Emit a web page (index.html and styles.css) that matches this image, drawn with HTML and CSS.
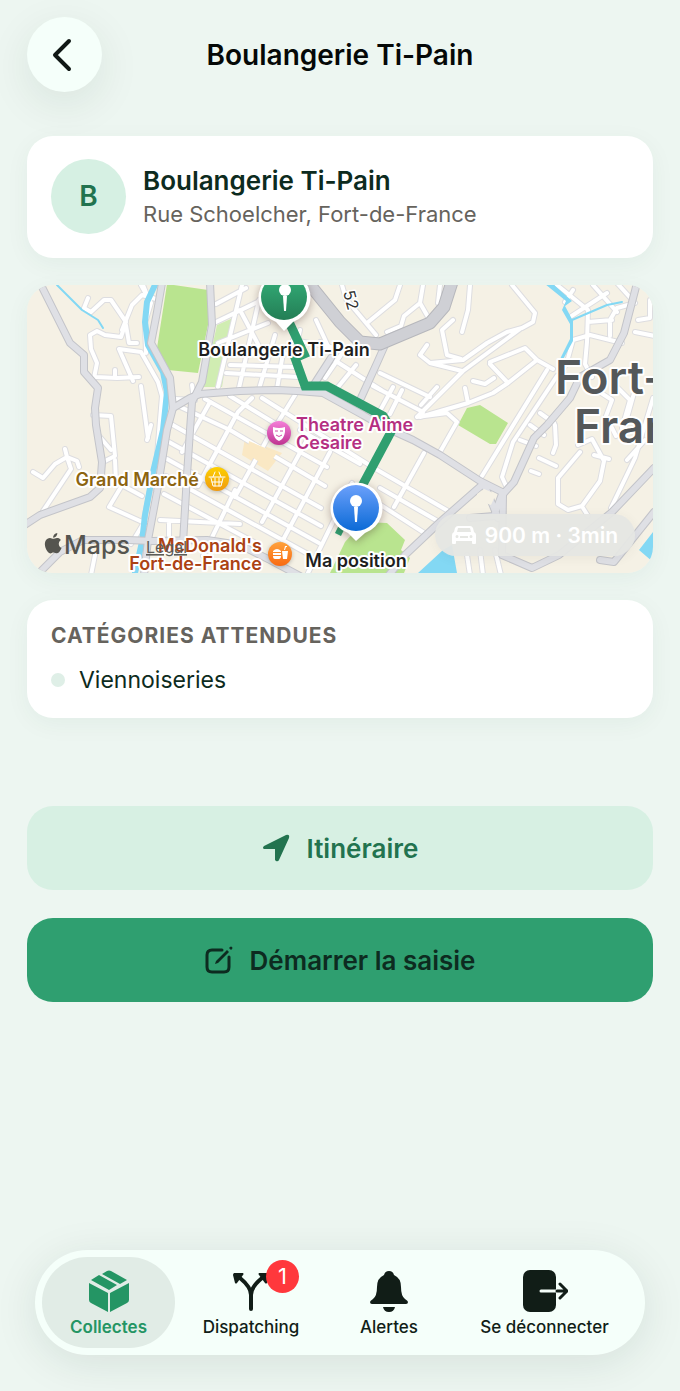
FILE: index.html
```html
<!DOCTYPE html>
<html lang="fr">
<head>
    <meta charset="UTF-8" />
    <meta name="viewport" content="width=device-width, initial-scale=1" />
    <title>Boulangerie Ti-Pain</title>
    <link rel="stylesheet" href="styles.css">
</head>
<body>
    <header class="topbar">
        <button class="back" aria-label="Retour">
            <svg width="20" height="34" viewBox="0 0 20 34"><path d="M17 3 3 17l14 14" /></svg>
        </button>
        <h1>Boulangerie Ti-Pain</h1>
    </header>

    <main>
        <section class="card shop">
            <div class="avatar">B</div>
            <div>
                <h2>Boulangerie Ti-Pain</h2>
                <p>Rue Schoelcher, Fort-de-France</p>
            </div>
        </section>

        <section class="map">
            <svg class="map-canvas" viewBox="27 285 626 288" preserveAspectRatio="xMidYMid slice">
                <defs>
                    <linearGradient id="green" x2="0" y2="1"><stop stop-color="#35b07a" /><stop offset="1" stop-color="#237e55" /></linearGradient>
                    <linearGradient id="blue" x2="0" y2="1"><stop stop-color="#6ba0fb" /><stop offset="1" stop-color="#0b6ad6" /></linearGradient>
                    <linearGradient id="pink" x2="0" y2="1"><stop stop-color="#f47fd8" /><stop offset="1" stop-color="#bf3391" /></linearGradient>
                    <linearGradient id="yellow" x2="0" y2="1"><stop stop-color="#fdd000" /><stop offset="1" stop-color="#f09a10" /></linearGradient>
                    <linearGradient id="orange" x2="0" y2="1"><stop stop-color="#ffa23c" /><stop offset="1" stop-color="#f96a12" /></linearGradient>
                    <g id="streets">
                        <!-- west hills -->
                        <path d="M88 298l-4 10 7 4 13-12 7 0 15 22-5 15-16-2-8-4-7 4 1 14 6 14-4 20M96 377l21 1 22-1M115 370v8M119 349l14 32M119 349l22 3 17 30 4 14-5 60-14 68-12 20M126 325l3 18 8 0M122 330l10-25 10-10 14 4M143 285l4 10M141 386l7 52M93 415l18 1 4 40-12 6M99 436l12 14M151 425l-4 15M141 285l10 18-6 20 1 30" />
                        <path d="M33 472l10 6 12-14 12-7 10 4 2 6M67 457l-2-8M67 457l4 12-28 42M115 460l1 22 26 14M121 487l-12 20 40 18M95 555l-4 20" />
                        <!-- north grid -->
                        <path d="M216 304l30-16M214 323l62-30M218 343l50-20M230 352l68 2M226 373l72 4M242 285l-24 102M259 300l-20 88M275 335l-16 54M240 310l20 38M230 365l66 2M293 340l38 7M283 353l-6 36M316 320l12 26M300 330l-6 26" />
                        <path d="M175 399l20 1M192 385l2 14" />
                        <!-- around the highway -->
                        <path d="M342 285l4 14 20 24 10 12M400 285l-5 15-28 23M423 285l-3 18 8 14M420 303l-16 13-3 10-14 6M440 285l-2 18M336 350l-16-8M331 358l50 32M343 352l-18 26M356 365l-18 22" />
                        <!-- central grid running down to the bay -->
                        <path d="M174 404l56 26 95 56M171 424l150 84M169 442l152 84M167 459l152 84M166 476l142 78M164 494l90 48M205 399l122 68M262 398l112 70 76 44M300 430l60 34M380 488l56 32M376 502l50 32M230 396l46 28" />
                        <path d="M330 452l-47 88M308 438l-46 84M352 483l-44 90M275 425l-40 72M238 412l-40 74M424 453l-30 54M210 402l-28 50M252 398l-14 14M295 395l-20 32M160 520l80 4M235 490l-32 66M169 523v28" />
                        <!-- east of the highway -->
                        <path d="M512 285l23 28-2 9-11 6-15 4-20 11-24 17-33 3-10-8 7-10M470 285l-2 25-6 22M453 320l-11 10 5 25 14 4M430 363l32 8M520 329l-57 42-46 46M490 362l35-14 12 12-29 23-15 10-25 10-48 14M537 360l16 9M490 364l18 19M465 388l3 15M473 381l12 3 9-6M380 373l50 24M373 386l50 26M437 387l-16 18M393 387l-12 22M402 390l-12 24M417 417l30-4 10 9-17 30" />
                        <path d="M547 370l-65 106M557 376l-44 66-11 35 5 11M540 413l14 10M530 425l14 10M520 440l16 6M555 425l1 20-3 8M539 458l17 8M531 471l8 3" />
                        <path d="M557 285l31 25-1 32-2 22 7 13M570 317l37-24M593 285l24 27M617 283l18 20-18 5-7 12v16M588 322l24-2M573 340l17-5 32 8M573 340l-6 22-6 12M573 290l-8 12M650 300v18l-12 2M635 332l20 4" />
                        <path d="M598 391l14 9-6 16 10 20M618 388l12 12-8 28M636 386l-14 50M653 398l-18 60-24 50M645 440l-18 20M580 452l-22 26v26l10 6 14-4 18-25 4-20-12-22-14 6M594 455l15 4M583 508l5 8M467 555l3 20M480 550l3 25M495 550l6 25" />
                    </g>
                    <g id="avenues">
                        <path d="M40 283l30 60 14 12v17l14 16-3 20 1 17 6 37-2 26-10 9-50 18-20 13" />
                        <path d="M162 283l-5 29-6 31 19 35 3 30-6 22-10 62-9 48-4 35M210 283l2 42-10 57-10 20-2 28-3 45-4 68" />
                        <path d="M173 408l17-10 10-4 40-3 37-1 20 1 26 2 40 22 17 10 33 15 27 15 40 26 24 12 10-11 20-44 13-13 23-27 10-21 30-17 14-27 13-50" />
                        <path d="M482 485l-42 37-35 33-16 20M503 495l-1 60 30 13 27-13 53-43 42-44M484 484l14 34M502 494l-8 22-24 2M600 560l14 2 40-50M385 345l-8 18-16 35M331 358l-18 28M38 574l22-22 23-12h44l26 1 54-1 33 5 30 15 30 16" />
                    </g>
                </defs>

                <rect class="land" x="27" y="285" width="626" height="288" />
                <path class="park" d="M167 284l41 6v35l-10 48-30-3-11-22zM458 425l9-17 13-3 28 18-12 21h-6zM330 573l15-31 18-20 24 1 18 17-4 10 9 8-6 15z" />
                <path class="park light" d="M217 325l16-7-11 69h-19z" />
                <path class="plaza" d="M245 438l37 15-14 18-26-16z" />
                <path class="water" d="M418 573l25-23 9-5 5 28zM639 550l14-18v30z" />

                <use href="#streets" class="casing" />
                <use href="#streets" class="street" />
                <path class="plaza" d="M249 441l28 12-10 14-20-13z" />
                <path class="river thin" d="M57 285l13 13 12 12 16 10 5 8M572 320l35-15 15-3" />
                <path class="river" d="M155 285l-8 17-2 20 3 23 15 27 4 20-4 38-10 42-8 43-3 27-7 31" />
                <path class="water" d="M545 284h8l19 17-7 5 8 15v20l-13 24-3 2 4-10 9-18v-15l-8-14 4-9z" />
                <use href="#avenues" class="avenue-casing" />
                <use href="#avenues" class="avenue" />
                <path class="island" d="M477 494l7-5 12 5-5 11-14-5z" />
                <path class="highway-casing" d="M306 280l34 42 20 20 20 2 50-21 14-16 8-25" />
                <path class="highway" d="M306 280l34 42 20 20 20 2 50-21 14-16 8-25" />
                <text class="road-number" transform="translate(343 292) rotate(75)">52</text>

                <path class="route" d="M289 322l15 32-9 4 10 28h22l56 30 9 14-30 56M337 529l6 3" />

                <g class="marker">
                    <path d="M284 331l-8-9a26 26 0 1 1 17 0z" />
                    <circle cx="284" cy="297" r="23" fill="url(#green)" />
                    <circle cx="285" cy="290" r="6" />
                    <path d="M283 296h4l-1 15h-2z" />
                </g>
                <g class="marker">
                    <path d="M356 541l-8-8a26 26 0 1 1 17 0z" />
                    <circle cx="356" cy="508" r="23" fill="url(#blue)" />
                    <circle cx="356" cy="501" r="6" />
                    <path d="M354 507h4l-1 15h-2z" />
                </g>
                <g class="poi">
                    <circle cx="279" cy="433" r="12" fill="url(#pink)" />
                    <path d="M273 427q6 2 12 0v5q-1 7-6 9-5-2-6-9z" />
                    <path d="M275 431h3M280 431h3M276 435q3 3 6 0" fill="none" stroke="#d04fa9" />
                    <circle cx="217" cy="479" r="12" fill="url(#yellow)" />
                    <path d="M209 477h16M211 478l2 8h8l2-8M212 482h10M215 478v8M219 478v8M213 477l2-5M221 477l-2-5" fill="none" stroke="#fff" stroke-linecap="round" />
                    <circle cx="280" cy="554" r="12" fill="url(#orange)" />
                    <path d="M273 551q4-4 8 0v1h-8zM273 553h8v2h-8zM273 556h8q0 3-2 3h-4q-2 0-2-3zM282 551h6l-1 8h-4zM284 550l1-4 2 0v1h-1l-1 3z" />
                </g>

                <text class="city" x="555" y="394">Fort-de-</text>
                <text class="city" x="574" y="443">France</text>
                <text class="place" x="284" y="356" text-anchor="middle">Boulangerie Ti-Pain</text>
                <text class="place" x="356" y="567" text-anchor="middle">Ma position</text>
                <text class="place theatre" x="296" y="431">Theatre Aime</text>
                <text class="place theatre" x="296" y="449">Cesaire</text>
                <text class="place market" x="199" y="486" text-anchor="end">Grand Marché</text>
                <text class="place food" x="262" y="552" text-anchor="end">McDonald's</text>
                <text class="place food" x="262" y="570" text-anchor="end">Fort-de-France</text>
                <a href="#legal"><text class="legal" x="146" y="553">Legal</text></a>
                <path class="brand" transform="translate(43 533) scale(.85)" d="M12.15 6.9c-.95 0-2.42-1.08-3.96-1.04-2.04.03-3.91 1.18-4.96 3.01-2.12 3.68-.55 9.1 1.52 12.09 1.01 1.45 2.2 3.09 3.79 3.04 1.52-.07 2.09-.99 3.93-.99 1.83 0 2.35.99 3.96.95 1.64-.03 2.68-1.48 3.68-2.95 1.16-1.69 1.64-3.33 1.66-3.42-.04-.01-3.18-1.22-3.22-4.86-.03-3.04 2.48-4.49 2.6-4.56-1.43-2.09-3.62-2.32-4.39-2.38-2-.16-3.68 1.09-4.61 1.11zM15.53 3.83c.84-1.01 1.4-2.43 1.25-3.83-1.21.05-2.66.8-3.53 1.82-.78.9-1.45 2.34-1.27 3.71 1.34.1 2.71-.69 3.55-1.7" />
                <text class="brand maps" x="64" y="554">Maps</text>
            </svg>
            <div class="trip">
                <svg width="24" height="20" viewBox="0 0 24 20"><path fill-rule="evenodd" d="M6 1h12q2 0 3 2l1 4q2 1 2 3v8q0 1-1 1h-2q-1 0-1-1v-2H4v2q0 1-1 1H1q-1 0-1-1v-8q0-2 2-3l1-4q1-2 3-2zM6 3 5 7h14l-1-4zM5 10a1 1 0 0 0 0 3 1 1 0 0 0 0-3zM19 10a1 1 0 0 0 0 3 1 1 0 0 0 0-3zM8 11h8v2H8z" /></svg>
                <span>900 m · 3min</span>
            </div>
        </section>

        <section class="card categories">
            <h3>Catégories attendues</h3>
            <ul>
                <li>Viennoiseries</li>
            </ul>
        </section>

        <div class="actions">
            <button class="btn light">
                <svg width="28" height="28" viewBox="0 0 28 28"><path d="M2 12 24 1q4-1 3 3L17 26q-1 2-3 1l-1-1V15H2q-2-1 0-3z" /></svg>
                Itinéraire
            </button>
            <button class="btn primary">
                <svg width="28" height="28" viewBox="0 0 28 28"><path class="line" d="M17 4H7Q2 4 2 9v12q0 5 5 5h12q5 0 5-5V11" /><path d="M22 4l2 2-11 11-3 1 1-3zM25 1q1-1 2 0t0 2l-1 1-2-2z" /></svg>
                Démarrer la saisie
            </button>
        </div>
    </main>

    <nav class="tabbar">
        <a href="#collectes" class="tab active">
            <svg width="42" height="44" viewBox="0 0 42 44"><path d="M1 14l19 10v19L3 34q-2-1-2-3zM41 14v17q0 2-2 3L22 43V24zM3 11l8-5 18 10-8 5zM14 5l5-3q2-1 4 0l16 9-7 4z" /></svg>
            <span>Collectes</span>
        </a>
        <a href="#dispatching" class="tab">
            <span class="icon-wrap">
                <svg width="42" height="44" viewBox="0 0 42 44"><path class="line thick" d="M21 40V26q0-8-11-17M21 26q0-8 11-17" /><path d="M4 4h9q1 1 0 2l-6 8q-1 1-2 0L3 6q0-1 1-2zM38 4h-9q-1 1 0 2l6 8q1 1 2 0l2-8q0-1-1-2z" /></svg>
                <span class="badge">1</span>
            </span>
            <span>Dispatching</span>
        </a>
        <a href="#alertes" class="tab">
            <svg width="42" height="44" viewBox="0 0 42 44"><path d="M16 6q1-4 5-4t5 4q7 3 7 12 0 9 4 12 3 2 3 3 0 2-2 2H4q-2 0-2-2 0-1 3-3 4-3 4-12 0-9 7-12zM15 38h12q-1 5-6 5t-6-5z" /></svg>
            <span>Alertes</span>
        </a>
        <a href="#deconnexion" class="tab">
            <svg width="46" height="44" viewBox="0 0 46 44"><rect x="1" y="1" width="33" height="42" rx="7" /><path class="gap" d="M19 22h15" /><path class="line" d="M35 22h10M38 15l7 7-7 7" /></svg>
            <span>Se déconnecter</span>
        </a>
    </nav>
</body>
</html>
```
FILE: styles.css
```css
* {
    box-sizing: border-box;
    margin: 0;
    padding: 0;
}
body {
    display: flex;
    flex-direction: column;
    min-height: 100vh;
    padding: 17px 27px 36px;
    background-color: #edf6f1;
    color: #0d2b20;
    font-family: Inter, "Liberation Sans", sans-serif;
}
button {
    border: none;
    font-family: inherit;
    cursor: pointer;
}
.topbar {
    display: grid;
    grid-template-columns: 75px 1fr 75px;
    align-items: center;
    margin-bottom: 44px;
}
.topbar h1 {
    color: #050807;
    font-size: 28px;
    font-weight: 600;
    text-align: center;
}
.back {
    display: flex;
    justify-content: center;
    align-items: center;
    width: 75px;
    height: 75px;
    padding-right: 6px;
    border-radius: 50%;
    background-color: #f5fffa;
    box-shadow: 0 12px 44px rgba(20, 50, 35, 0.09);
}
.back svg {
    fill: none;
    stroke: #101815;
    stroke-width: 4;
    stroke-linecap: round;
    stroke-linejoin: round;
}
main {
    display: flex;
    flex-direction: column;
    gap: 27px;
}
.card {
    border-radius: 26px;
    background-color: #fff;
    box-shadow: 0 6px 24px rgba(20, 80, 55, 0.05);
}
.shop {
    display: flex;
    align-items: center;
    gap: 17px;
    padding: 23px 24px 24px;
}
.avatar {
    width: 75px;
    height: 75px;
    border-radius: 50%;
    background-color: #d6f0e3;
    color: #22734f;
    font-size: 28px;
    font-weight: 600;
    line-height: 75px;
    text-align: center;
}
.shop h2 {
    font-size: 26px;
    font-weight: 600;
    line-height: 34px;
}
.shop p {
    color: #66635d;
    font-size: 22px;
    line-height: 32px;
}

/* map */
.map {
    position: relative;
    height: 288px;
    border-radius: 26px;
    overflow: hidden;
    box-shadow: 0 6px 24px rgba(20, 80, 55, 0.05);
}
.map-canvas {
    display: block;
    width: 100%;
    height: 100%;
}
.land, .island {
    fill: #f5f1e5;
}
.park {
    fill: #b9e48f;
}
.park.light {
    fill: #d0edb2;
}
.plaza {
    fill: #fae8c4;
}
.water {
    fill: #83d8f4;
}
.river, .casing, .street, .avenue-casing, .avenue, .highway-casing, .highway, .route {
    fill: none;
    stroke-linecap: round;
    stroke-linejoin: round;
}
.river {
    stroke: #83d8f4;
    stroke-width: 6;
}
.river.thin {
    stroke-width: 2;
}
.casing {
    stroke: #dddde0;
    stroke-width: 6;
}
.street {
    stroke: #fff;
    stroke-width: 4;
}
.avenue-casing {
    stroke: #c3c4c9;
    stroke-width: 8;
}
.avenue {
    stroke: #dfe0e5;
    stroke-width: 6;
}
.highway-casing {
    stroke: #b6b7bc;
    stroke-width: 13;
}
.highway {
    stroke: #cfd0d5;
    stroke-width: 11;
}
.route {
    stroke: #2f9f70;
    stroke-width: 9;
    stroke-linecap: butt;
    stroke-linejoin: miter;
}
.marker {
    fill: #fff;
    filter: drop-shadow(0 2px 4px rgba(60, 30, 30, 0.35));
}
.poi {
    fill: #fff;
    filter: drop-shadow(0 1px 2px rgba(0, 0, 0, 0.25));
}
.place, .city, .road-number {
    stroke: #fff;
    stroke-width: 4px;
    stroke-linejoin: round;
    paint-order: stroke;
}
.place {
    fill: #1e1e1e;
    font-size: 18px;
    font-weight: 600;
}
.city {
    fill: #54585a;
    font-size: 46px;
    font-weight: 600;
}
.road-number {
    fill: #333;
    font-size: 16px;
    stroke-width: 3px;
}
.theatre {
    fill: #b52f82;
}
.market {
    fill: #8c6410;
}
.food {
    fill: #ac4214;
}
.brand {
    fill: #55554f;
}
.maps {
    font-size: 25px;
    font-weight: 500;
}
.legal {
    fill: #5c5c58;
    font-size: 16px;
    text-decoration: underline;
}
.trip {
    position: absolute;
    right: 18px;
    bottom: 17px;
    display: flex;
    align-items: center;
    gap: 9px;
    height: 42px;
    padding: 0 17px;
    border-radius: 21px;
    background-color: rgba(229, 230, 227, 0.95);
    color: #fff;
    font-size: 21px;
    font-weight: 600;
    white-space: nowrap;
    box-shadow: 0 2px 12px rgba(60, 60, 60, 0.06);
}
.trip svg {
    fill: #fff;
}

.categories {
    padding: 22px 24px;
}
.categories h3 {
    margin-bottom: 14px;
    color: #66635d;
    font-size: 21px;
    font-weight: 700;
    letter-spacing: 1px;
    line-height: 28px;
    text-transform: uppercase;
}
.categories ul {
    list-style: none;
}
.categories li {
    display: flex;
    align-items: center;
    gap: 14px;
    font-size: 23px;
    line-height: 32px;
}
.categories li::before {
    content: "";
    width: 14px;
    height: 14px;
    border-radius: 50%;
    background-color: #dfefe7;
}
.actions {
    display: flex;
    flex-direction: column;
    gap: 28px;
    padding: 61px 0 40px;
}
.btn {
    display: flex;
    justify-content: center;
    align-items: center;
    gap: 17px;
    height: 84px;
    border-radius: 26px;
    font-size: 26px;
    font-weight: 600;
}
.btn svg {
    fill: currentColor;
}
.btn.light {
    background-color: #d7f0e3;
    color: #22734f;
}
.btn.primary {
    background-color: #2f9f70;
    color: #0d2b20;
}
.line {
    fill: none;
    stroke: currentColor;
    stroke-width: 3;
    stroke-linecap: round;
    stroke-linejoin: round;
}
.btn .line {
    fill: none;
}

/* bottom navigation */
.tabbar {
    display: grid;
    grid-template-columns: 133fr 152fr 124fr 187fr;
    margin: auto 8px 0;
    padding: 7px;
    border-radius: 53px;
    background-color: #f5fffa;
    box-shadow: 0 8px 44px rgba(20, 50, 35, 0.1);
}
.tab {
    display: flex;
    flex-direction: column;
    align-items: center;
    height: 91px;
    padding-top: 12px;
    border-radius: 46px;
    color: #111d17;
    font-size: 17px;
    font-weight: 500;
    line-height: 28px;
    text-decoration: none;
    white-space: nowrap;
}
.tab svg {
    display: block;
    fill: currentColor;
}
.tab.active {
    background-color: #e1ece6;
    color: #249564;
    font-weight: 600;
}
.tab .line {
    fill: none;
}
.tab .thick {
    stroke-width: 4;
}
.tab .gap {
    stroke: #f5fffa;
    stroke-width: 3;
    stroke-linecap: round;
}
.icon-wrap {
    position: relative;
}
.badge {
    position: absolute;
    top: -9px;
    left: 36px;
    width: 33px;
    height: 33px;
    border-radius: 50%;
    background-color: #ff383c;
    color: #fff;
    font-size: 22px;
    font-weight: 400;
    line-height: 33px;
    text-align: center;
}
```
